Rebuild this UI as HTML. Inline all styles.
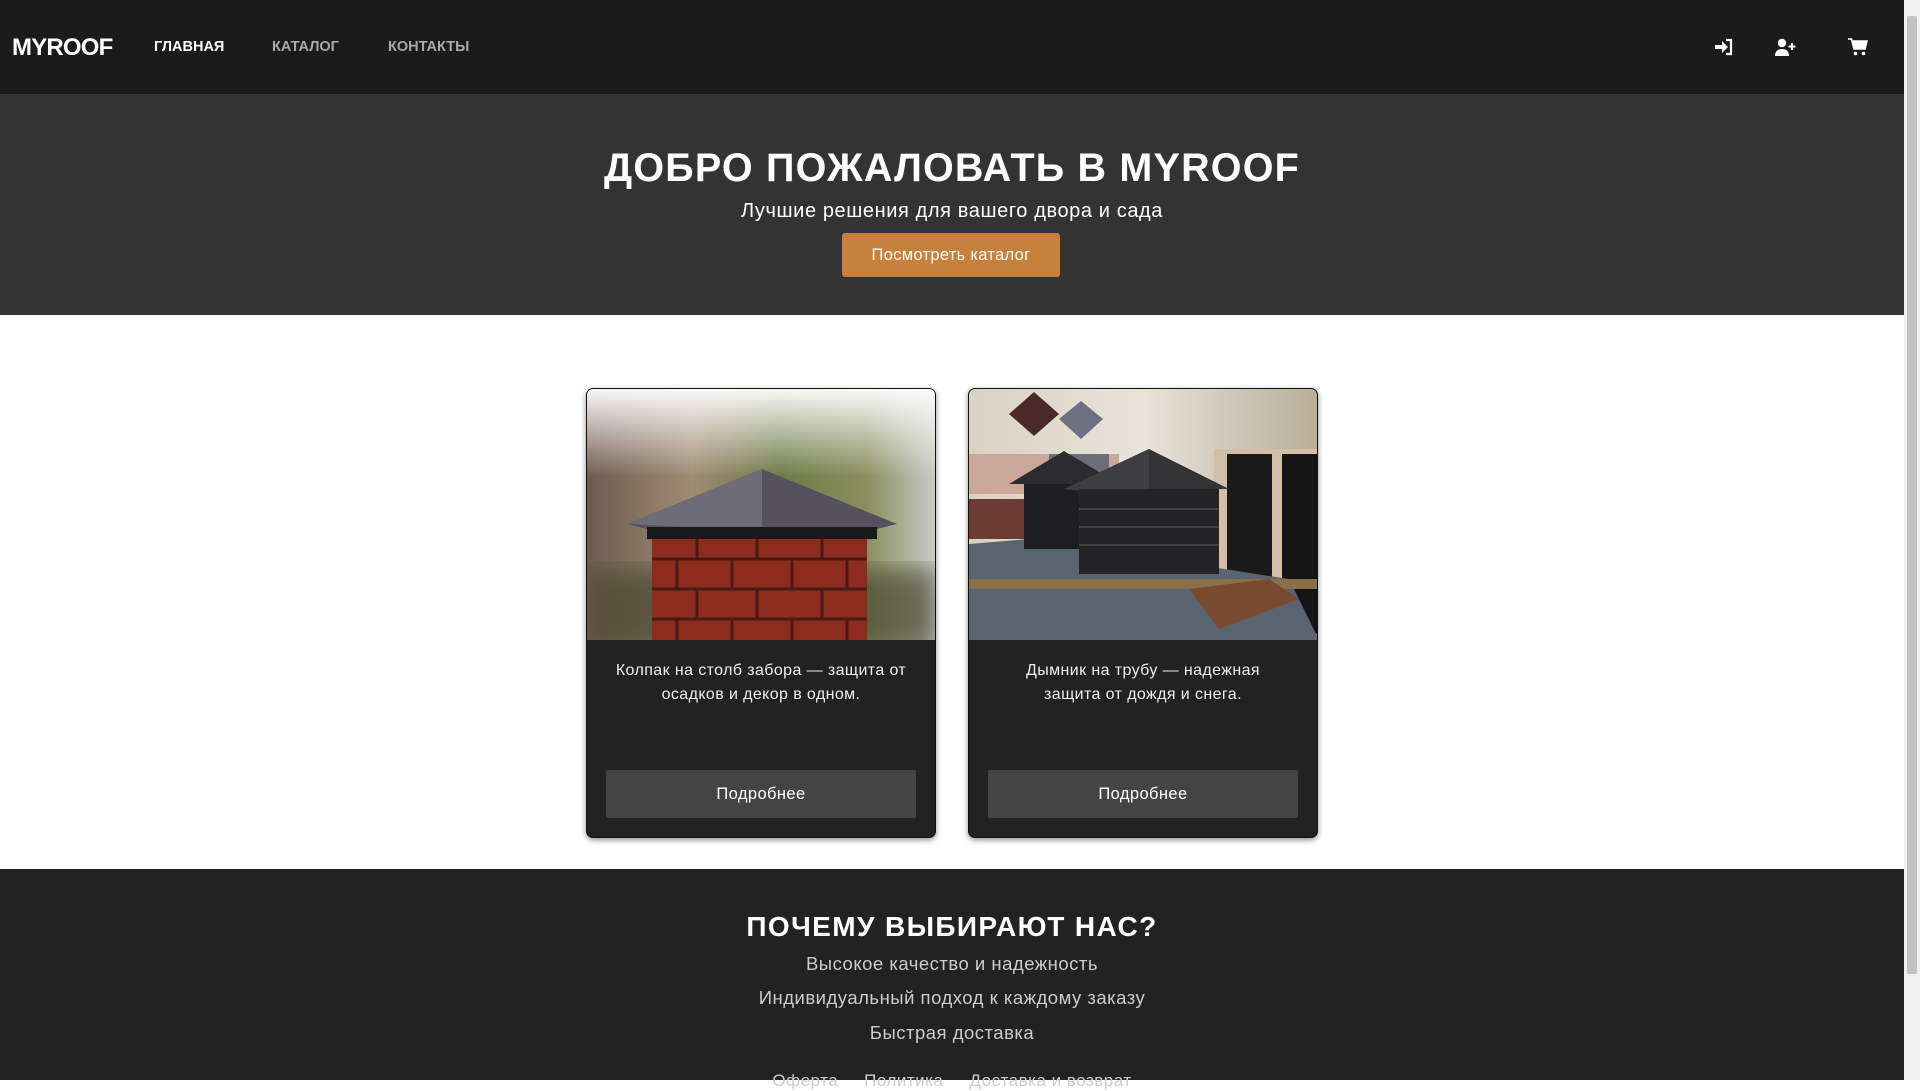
<!DOCTYPE html>
<html><head><meta charset="utf-8"><style>
*{margin:0;padding:0;box-sizing:border-box}
html,body{width:1920px;height:1080px;overflow:hidden;background:#fff;font-family:"Liberation Sans",sans-serif}
.hdr{position:absolute;left:0;top:0;width:1904px;height:94px;background:#1b1b1b}
.logo{position:absolute;left:12px;top:34px;color:#fff;font-weight:bold;font-size:24px;letter-spacing:-0.8px}
.nav{position:absolute;top:39px;font-size:14.5px;font-weight:bold;color:#aaa;text-transform:uppercase}
.hero{position:absolute;left:0;top:94px;width:1904px;height:221px;background:#333;text-align:center;color:#fff}
.hero h1{position:absolute;left:0;right:0;top:52px;font-size:39.5px;letter-spacing:1.2px;font-weight:bold}
.hero p{position:absolute;left:0;right:0;top:106px;font-size:20px;letter-spacing:0.6px}
.btn{position:absolute;left:842px;top:139px;width:218px;height:44px;background:#c8803d;border-radius:3px;font-size:16.5px;line-height:44px;letter-spacing:0.3px}
.card{position:absolute;top:388px;width:350px;height:450px;background:#222;border:1.5px solid #111;border-radius:7px;overflow:hidden;box-shadow:0 2px 6px rgba(0,0,0,.45)}
.card svg{display:block}
.ct{position:absolute;left:28px;right:28px;top:270px;text-align:center;color:#eee;font-size:16px;line-height:24px;letter-spacing:0.4px}
.cb{position:absolute;left:19px;width:310px;top:381px;height:48px;background:#444;border-radius:2px;color:#fff;text-align:center;line-height:48px;font-size:16.5px;letter-spacing:0.4px}
.ftr{position:absolute;left:0;top:869px;width:1904px;height:211px;background:#222;text-align:center;color:#ccc}
.ftr h2{position:absolute;left:0;right:0;top:42px;font-size:28px;color:#fff;letter-spacing:1.4px}
.ftr p{position:absolute;left:0;right:0;font-size:18.5px;letter-spacing:0.5px}
.sb{position:absolute;left:1904px;top:0;width:16px;height:1080px;background:#f1f1f1}
.sb div{position:absolute;left:3px;top:16px;width:10px;height:958px;background:#c1c1c1;border-radius:2px}
</style></head><body>
<div class="hdr">
<div class="logo">MYROOF</div>
<div class="nav" style="left:154px;color:#fff">Главная</div>
<div class="nav" style="left:272px">Каталог</div>
<div class="nav" style="left:388px">Контакты</div>
<svg style="position:absolute;left:1714px;top:38px" width="20" height="18" viewBox="0 0 20 18"><path d="M1 7h7V3l6 6-6 6v-4H1z" fill="#fff"/><path d="M12 2h5v14h-5" stroke="#fff" stroke-width="2.2" fill="none"/></svg>
<svg style="position:absolute;left:1775px;top:38px" width="22" height="18" viewBox="0 0 22 18"><circle cx="7" cy="5" r="4.2" fill="#fff"/><path d="M0 18c0-5 3-7 7-7s7 2 7 7z" fill="#fff"/><path d="M17 5v7M13.5 8.5h7" stroke="#fff" stroke-width="2"/></svg>
<svg style="position:absolute;left:1848px;top:38px" width="20" height="18" viewBox="0 0 20 18"><path d="M0 1h3.5l2.5 10h11l2-8H5" fill="#fff" stroke="#fff" stroke-width="1.6"/><circle cx="7.5" cy="15.5" r="1.8" fill="#fff"/><circle cx="15.5" cy="15.5" r="1.8" fill="#fff"/></svg>
</div>
<div class="hero">
<h1>ДОБРО ПОЖАЛОВАТЬ В MYROOF</h1>
<p>Лучшие решения для вашего двора и сада</p>
<div class="btn">Посмотреть каталог</div>
</div>

<div class="card" style="left:586px">
<svg width="350" height="251" viewBox="0 0 350 251">
<defs>
<linearGradient id="g1" x1="0" x2="1"><stop offset="0" stop-color="#6e5a50"/><stop offset=".3" stop-color="#a08c74"/><stop offset=".55" stop-color="#6d7a45"/><stop offset=".8" stop-color="#8a8f60"/><stop offset="1" stop-color="#c9ccc8"/></linearGradient>
<linearGradient id="g2" x1="0" y1="0" x2="0" y2="1"><stop offset="0" stop-color="#fff" stop-opacity=".95"/><stop offset=".35" stop-color="#fff" stop-opacity="0"/></linearGradient>
<filter id="bl"><feGaussianBlur stdDeviation="12"/></filter>
</defs>
<rect width="350" height="251" fill="url(#g1)"/>
<rect width="350" height="251" fill="url(#g2)"/>
<rect x="0" y="180" width="350" height="80" fill="#4a4a30" filter="url(#bl)" opacity=".7"/>
<rect x="65" y="140" width="215" height="120" fill="#8d2c1e"/>
<path d="M65 170h215M65 200h215M65 230h215M110 140v30M170 140v30M235 140v30M90 170v30M145 170v30M205 170v30M260 170v30M110 200v30M170 200v30M235 200v30M90 230v21M145 230v21M205 230v21M260 230v21" stroke="#4a1a12" stroke-width="3"/>
<path d="M40 135L175 80L310 135L290 140H60z" fill="#55525e"/>
<path d="M40 135L175 80L175 142z" fill="#6f6c7a"/>
<rect x="60" y="138" width="230" height="12" fill="#1a1a1c"/>
</svg>
<div class="ct">Колпак на столб забора — защита от осадков и декор в одном.</div>
<div class="cb">Подробнее</div>
</div>

<div class="card" style="left:968px">
<svg width="350" height="251" viewBox="0 0 350 251">
<defs><linearGradient id="w" x1="0" x2="1"><stop offset="0" stop-color="#d8d2c2"/><stop offset=".5" stop-color="#e8e4da"/><stop offset="1" stop-color="#b8ad98"/></linearGradient></defs>
<rect width="350" height="251" fill="url(#w)"/>
<rect x="0" y="65" width="150" height="40" fill="#c9a89a"/>
<path d="M40 25l25-22 25 22-25 22z" fill="#4a2a28"/><path d="M90 30l22-18 22 18-22 20z" fill="#6c7080"/>
<rect x="245" y="60" width="105" height="190" fill="#d2bfa8"/>
<rect x="258" y="65" width="45" height="180" fill="#1a1a1a"/><rect x="313" y="65" width="37" height="180" fill="#151515"/>
<rect x="80" y="65" width="60" height="50" fill="#6d6e78"/>
<rect x="0" y="110" width="80" height="40" fill="#6a3c34"/>
<path d="M0 155L60 150L320 190L350 251H0z" fill="#5a6470"/>
<rect x="0" y="190" width="350" height="10" fill="#8a7048"/>
<path d="M220 200l80-10 30 20-80 30z" fill="#7a4a30"/>
<path d="M40 95L95 62L150 95z" fill="#2c2c2e"/><rect x="55" y="95" width="80" height="65" fill="#1e1e20"/>
<path d="M95 100L180 60L260 100z" fill="#333336"/><path d="M95 100L180 60L180 110z" fill="#3e3e42"/>
<rect x="110" y="100" width="140" height="85" fill="#242426"/>
<path d="M110 120h140M110 138h140M110 156h140" stroke="#444" stroke-width="2"/>
</svg>
<div class="ct">Дымник на трубу — надежная защита от дождя и снега.</div>
<div class="cb">Подробнее</div>
</div>

<div class="ftr">
<h2>ПОЧЕМУ ВЫБИРАЮТ НАС?</h2>
<p style="top:84px">Высокое качество и надежность</p>
<p style="top:118px">Индивидуальный подход к каждому заказу</p>
<p style="top:153px">Быстрая доставка</p>
<p style="top:202px;font-size:17px"><span style="margin-right:26px">Оферта</span><span style="margin-right:26px">Политика</span><span>Доставка и возврат</span></p>
</div>
<div class="sb"><div></div></div>
</body></html>
